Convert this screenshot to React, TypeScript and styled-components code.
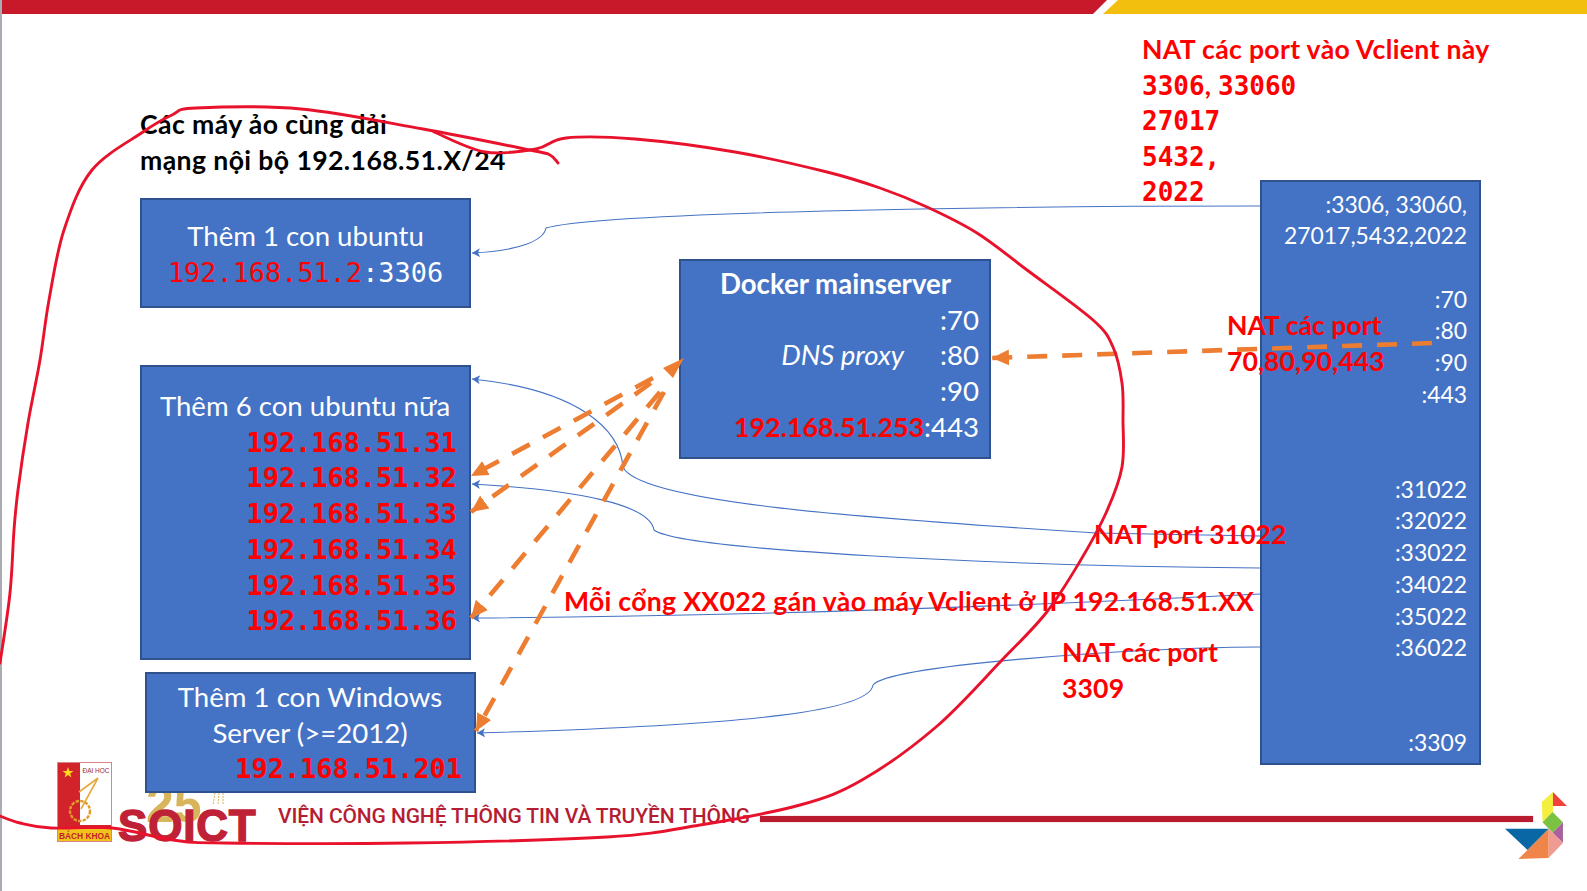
import React from "react";
import styled, { createGlobalStyle } from "styled-components";

const Global = createGlobalStyle`
  html, body { margin: 0; padding: 0; background: #fff; }
  body { font-family: Lato, "Noto Sans", sans-serif; }
`;

const SANS = `Lato, "Noto Sans", sans-serif`;
const MONO = `"DejaVu Sans Mono", "Liberation Mono", monospace`;

const Page = styled.div`
  position: relative;
  width: 1587px;
  height: 891px;
  overflow: hidden;
  background: #fff;
  box-shadow: inset 2px 0 0 #a9adb3;
`;

const TopBar = styled.div`
  position: relative;
  z-index: 1;
  display: flex;
  height: 14px;
  margin-left: 2px;
`;

const RedStripe = styled.div`
  flex: 0 0 1105px;
  background: #c8192a;
  clip-path: polygon(0 0, 100% 0, calc(100% - 14px) 100%, 0 100%);
`;

const YellowStripe = styled.div`
  flex: 1;
  margin-left: -4px;
  background: #f2bf0f;
  clip-path: polygon(15px 0, 100% 0, 100% 100%, 0 100%);
`;

const Canvas = styled.div`
  position: relative;
  height: 760px;
  margin-top: -14px;
`;

const Node = styled.div<{ $x: number; $y: number; $w: number; $h: number }>`
  position: absolute;
  left: ${(p) => p.$x}px;
  top: ${(p) => p.$y}px;
  width: ${(p) => p.$w}px;
  height: ${(p) => p.$h}px;
  box-sizing: border-box;
  display: flex;
  flex-direction: column;
  background: #4472c4;
  border: 2px solid #2f528f;
  color: #fff;
  font-family: ${SANS};
  font-size: 27.6px;
  line-height: 35.7px;
  z-index: 2;
`;

const CenteredNode = styled(Node)`
  align-items: center;
  justify-content: center;
  padding-top: 1px;
`;

const ListNode = styled(Node)<{ $pt: number; $pr: number }>`
  align-items: flex-end;
  padding: ${(p) => p.$pt}px ${(p) => p.$pr}px 0 0;
`;

const PortNode = styled(Node)`
  align-items: flex-end;
  padding: 6.5px 12px 0 0;
  font-size: 22.9px;
  line-height: 31.7px;
`;

const PortRow = styled.div`
  min-height: 31.7px;
  white-space: pre;
`;

const Line = styled.div`
  white-space: pre;
`;

const CenterLine = styled(Line)`
  align-self: center;
  margin-right: -11px;
`;

const DnsRow = styled.div`
  display: flex;
  gap: 36px;
`;

const Italic = styled.span`
  font-style: italic;
`;

const IpText = styled.span<{ $bold?: boolean; $white?: boolean }>`
  font-family: ${MONO};
  font-size: 26.9px;
  line-height: 1;
  font-weight: ${(p) => (p.$bold ? 700 : 400)};
  color: ${(p) => (p.$white ? "#fff" : "#ff0000")};
`;

const RedBold = styled.span`
  color: #ff0000;
  font-weight: 700;
  font-size: 26.8px;
`;

const Heading = styled.b`
  font-weight: 700;
`;

const Label = styled.div<{ $x: number; $y: number; $color?: string; $track?: number }>`
  position: absolute;
  left: ${(p) => p.$x}px;
  top: ${(p) => p.$y}px;
  z-index: 4;
  font-family: ${SANS};
  font-size: 26.6px;
  font-weight: 700;
  line-height: 35.6px;
  white-space: pre;
  color: ${(p) => p.$color ?? "#ff0000"};
  letter-spacing: ${(p) => p.$track ?? 0}px;
`;

const MonoNum = styled.span`
  font-family: ${MONO};
  font-size: 26px;
  line-height: 1;
  letter-spacing: 0;
`;

const Overlay = styled.svg<{ $z: number }>`
  position: absolute;
  left: 0;
  top: 0;
  width: 1587px;
  height: 891px;
  z-index: ${(p) => p.$z};
  pointer-events: none;
`;

const Footer = styled.footer`
  position: relative;
  z-index: 1;
  display: flex;
  align-items: flex-start;
  height: 131px;
  padding-left: 57px;
  padding-right: 54px;
  box-sizing: border-box;
`;

const Shield = styled.svg`
  flex: 0 0 55px;
  width: 55px;
  height: 80px;
  margin-top: 2px;
`;

const Brand = styled.div`
  position: relative;
  flex: 0 0 137px;
  height: 82px;
  margin: 0 0 0 6px;
`;

const BrandMark = styled.div`
  position: absolute;
  left: 0;
  top: 44px;
  font-family: "Liberation Sans", sans-serif;
  font-weight: 700;
  font-size: 44px;
  line-height: 44px;
  letter-spacing: 0.8px;
  color: #bf2236;
  -webkit-text-stroke: 1.4px #bf2236;
`;

const Anniversary = styled.div`
  position: absolute;
  left: 28px;
  top: 20px;
  font-family: "Liberation Sans", sans-serif;
  font-weight: 700;
  font-size: 50px;
  line-height: 50px;
  color: #d8b45a;
`;

const Ornament = styled.svg`
  position: absolute;
  left: 94px;
  top: 32px;
  width: 14px;
  height: 14px;
`;

const Institute = styled.div`
  flex: 0 0 472px;
  margin: 43px 0 0 23px;
  font-family: Roboto, ${SANS};
  font-size: 21px;
  font-weight: 500;
  line-height: 26px;
  letter-spacing: -0.12px;
  color: #b51d33;
  white-space: pre;
`;

const Rule = styled.div`
  flex: 1;
  height: 6px;
  margin: 56px 0 0 10px;
  background: #b81c2e;
  box-shadow: 0 0 1px #d9808a;
`;

const Tangram = styled.svg`
  position: absolute;
  left: 1505px;
  top: 32px;
  width: 62px;
  height: 67px;
`;

const ports: string[] = [
  ":3306, 33060,", "27017,5432,2022", "", ":70", ":80", ":90", ":443", "", "",
  ":31022", ":32022", ":33022", ":34022", ":35022", ":36022", "", "", ":3309",
];

const ips = ["31", "32", "33", "34", "35", "36"];

const smooth = (pts: number[][]) => {
  let d = `M${pts[0][0]} ${pts[0][1]}`;
  for (let i = 0; i < pts.length - 1; i++) {
    const p0 = pts[i - 1] ?? pts[i];
    const p1 = pts[i];
    const p2 = pts[i + 1];
    const p3 = pts[i + 2] ?? p2;
    const c1x = p1[0] + (p2[0] - p0[0]) / 6;
    const c1y = p1[1] + (p2[1] - p0[1]) / 6;
    const c2x = p2[0] - (p3[0] - p1[0]) / 6;
    const c2y = p2[1] - (p3[1] - p1[1]) / 6;
    d += ` C${c1x.toFixed(1)} ${c1y.toFixed(1)} ${c2x.toFixed(1)} ${c2y.toFixed(1)} ${p2[0]} ${p2[1]}`;
  }
  return d;
};

const inkOne = [
  [0, 663], [10, 593], [14, 530], [18, 490], [28, 423], [40, 360], [49, 300], [64, 230], [92, 170], [143, 132], [172, 115], [196, 108],
  [301, 109], [423, 129], [530, 150], [550, 155], [558, 163],
];
const inkTwo = [
  [434, 132], [485, 152], [536, 149], [566, 138], [635, 139], [735, 152], [827, 172], [880, 188],
  [927, 207], [977, 233], [1027, 270], [1093, 320], [1113, 347], [1122, 383], [1123, 420], [1122, 467],
  [1106, 513], [1079, 563], [1046, 613], [1002, 660], [936, 727], [862, 780], [800, 805], [700, 825], [607, 837],
  [408, 843], [224, 843], [173, 840], [112, 828], [51, 828], [20, 823], [0, 816],
];

const blue = [
  "M1260 206 C1000 206 600 212 546 228 C544 240 520 251 472 253",
  "M1260 536 L1095 533 C900 520 640 505 623 467 C620 430 580 390 472 379",
  "M1260 568 C1000 566 680 550 654 530 C650 505 580 490 472 484",
  "M1260 594 C1100 602 800 616 472 618",
  "M1260 647 C1130 648 890 665 873 685 C870 710 760 725 477 733",
];

const orange = [
  "M653 378 L471 476",
  "M651 383 L471 512",
  "M660 392 L471 618",
  "M664 392 L476 731",
  "M1432 343 L992 358",
];

export default function App() {
  return (
    <Page>
      <Global />
      <TopBar>
        <RedStripe />
        <YellowStripe />
      </TopBar>
      <Canvas>
        <CenteredNode $x={140} $y={198} $w={331} $h={110}>
          <Line>Thêm 1 con ubuntu</Line>
          <Line>
            <IpText>192.168.51.2</IpText>
            <IpText $white>:3306</IpText>
          </Line>
        </CenteredNode>

        <ListNode $x={140} $y={365} $w={331} $h={295} $pt={21} $pr={12}>
          <CenterLine>Thêm 6 con ubuntu nữa</CenterLine>
          {ips.map((n) => (
            <Line key={n}>
              <IpText $bold>192.168.51.{n}</IpText>
            </Line>
          ))}
        </ListNode>

        <ListNode $x={145} $y={672} $w={331} $h={121} $pt={5} $pr={12}>
          <CenterLine>Thêm 1 con Windows</CenterLine>
          <CenterLine>Server (&gt;=2012)</CenterLine>
          <Line>
            <IpText $bold>192.168.51.201</IpText>
          </Line>
        </ListNode>

        <ListNode $x={679} $y={259} $w={312} $h={200} $pt={5} $pr={10}>
          <CenterLine>
            <Heading>Docker mainserver</Heading>
          </CenterLine>
          <Line>:70</Line>
          <DnsRow>
            <Italic>DNS proxy</Italic>
            <span>:80</span>
          </DnsRow>
          <Line>:90</Line>
          <Line>
            <RedBold>192.168.51.253</RedBold>:443
          </Line>
        </ListNode>

        <PortNode $x={1260} $y={180} $w={221} $h={585}>
          {ports.map((p, i) => (
            <PortRow key={i}>{p}</PortRow>
          ))}
        </PortNode>

        <Overlay $z={3} viewBox="0 0 1587 891">
          <defs>
            <marker id="bluehead" markerUnits="userSpaceOnUse" markerWidth="9" markerHeight="10" refX="8" refY="5" orient="auto">
              <path d="M0 0.5 L8 5 L0 9.5 L2 5 Z" fill="#4472c4" />
            </marker>
            <marker id="orangehead" markerUnits="userSpaceOnUse" markerWidth="18" markerHeight="18" refX="17" refY="9" orient="auto">
              <path d="M0 1 L17 9 L0 17 Z" fill="#ed7d31" />
            </marker>
          </defs>
          {blue.map((d) => (
            <path key={d} d={d} fill="none" stroke="#4472c4" strokeWidth="1.1" markerEnd="url(#bluehead)" />
          ))}
          {orange.map((d) => (
            <path key={d} d={d} fill="none" stroke="#ed7d31" strokeWidth="4.6" strokeDasharray="20 15" markerEnd="url(#orangehead)" />
          ))}
          <polygon points="684,358 663,368 673,378" fill="#ed7d31" />
        </Overlay>

        <Label $x={140} $y={107} $color="#000" $track={0.4}>{"Các máy ảo cùng dải\nmạng nội bộ 192.168.51.X/24"}</Label>
        <Label $x={1142} $y={32} $track={0.33}>
          NAT các port vào Vclient này
          {"\n"}
          <MonoNum>3306</MonoNum>, <MonoNum>33060</MonoNum>
          {"\n"}
          <MonoNum>27017</MonoNum>
          {"\n"}
          <MonoNum>5432,</MonoNum>
          {"\n"}
          <MonoNum>2022</MonoNum>
        </Label>
        <Label $x={1227} $y={308}>{"NAT các port\n70,80,90,443"}</Label>
        <Label $x={1094} $y={517}>NAT port 31022</Label>
        <Label $x={564} $y={584} $track={0.29}>Mỗi cổng XX022 gán vào máy Vclient ở IP 192.168.51.XX</Label>
        <Label $x={1062} $y={635} $track={0.12}>{"NAT các port\n3309"}</Label>
      </Canvas>

      <Footer>
        <Shield viewBox="0 0 55 80">
          <rect x="0.5" y="0.5" width="54" height="79" fill="#fff" stroke="#d9838a" />
          <rect x="1" y="1" width="22" height="64" fill="#d2232a" />
          <rect x="1" y="63" width="53" height="4" fill="#d2232a" />
          <rect x="1" y="67" width="53" height="12" fill="#f2c21c" />
          <polygon points="11,5 12.4,9 16.5,9 13.2,11.5 14.4,15.5 11,13 7.6,15.5 8.8,11.5 5.5,9 9.6,9" fill="#ffd91a" />
          <text x="39" y="11" textAnchor="middle" fontFamily="Liberation Sans, sans-serif" fontSize="6.5" fill="#9b2b30">ĐẠI HỌC</text>
          <path d="M22 30 L41 16 L24 47" fill="none" stroke="#e9a93a" strokeWidth="1.6" />
          <circle cx="23" cy="49" r="10" fill="none" stroke="#e39a2c" strokeWidth="2.4" strokeDasharray="3.5 1.2" />
          <text x="27.5" y="77" textAnchor="middle" fontFamily="Liberation Sans, sans-serif" fontWeight="700" fontSize="8.4" fill="#c01f2b">BÁCH KHOA</text>
        </Shield>
        <Brand>
          <Anniversary>25</Anniversary>
          <Ornament viewBox="0 0 14 14">
            <path d="M3 1 L1 13 M7 1 L6 13 M11 1 L11 13" stroke="#d8b45a" strokeWidth="1" strokeDasharray="2 1" fill="none" />
          </Ornament>
          <BrandMark>SOICT</BrandMark>
        </Brand>
        <Institute>VIỆN CÔNG NGHỆ THÔNG TIN VÀ TRUYỀN THÔNG</Institute>
        <Rule />
        <Tangram viewBox="195 95 185 200">
          <polygon points="305,125 338,95 338,155 307,185" fill="#f4ee3e" />
          <polygon points="338,95 380,137 338,137" fill="#f0413a" />
          <polygon points="337,155 368,185 337,217 307,185" fill="#7cc242" />
          <polygon points="368,185 368,247 337,217" fill="#a8609f" />
          <polygon points="325,205 368,247 325,292" fill="#f09a94" />
          <polygon points="325,205 325,292 235,295" fill="#ef8549" />
          <polygon points="195,205 325,205 262,268" fill="#0a67a5" />
        </Tangram>
      </Footer>

      <Overlay $z={5} viewBox="0 0 1587 891">
        <path d={smooth(inkOne)} fill="none" stroke="#e8122d" strokeWidth="2.9" strokeLinecap="round" />
        <path d={smooth(inkTwo)} fill="none" stroke="#e8122d" strokeWidth="2.9" strokeLinecap="round" />
      </Overlay>
    </Page>
  );
}
